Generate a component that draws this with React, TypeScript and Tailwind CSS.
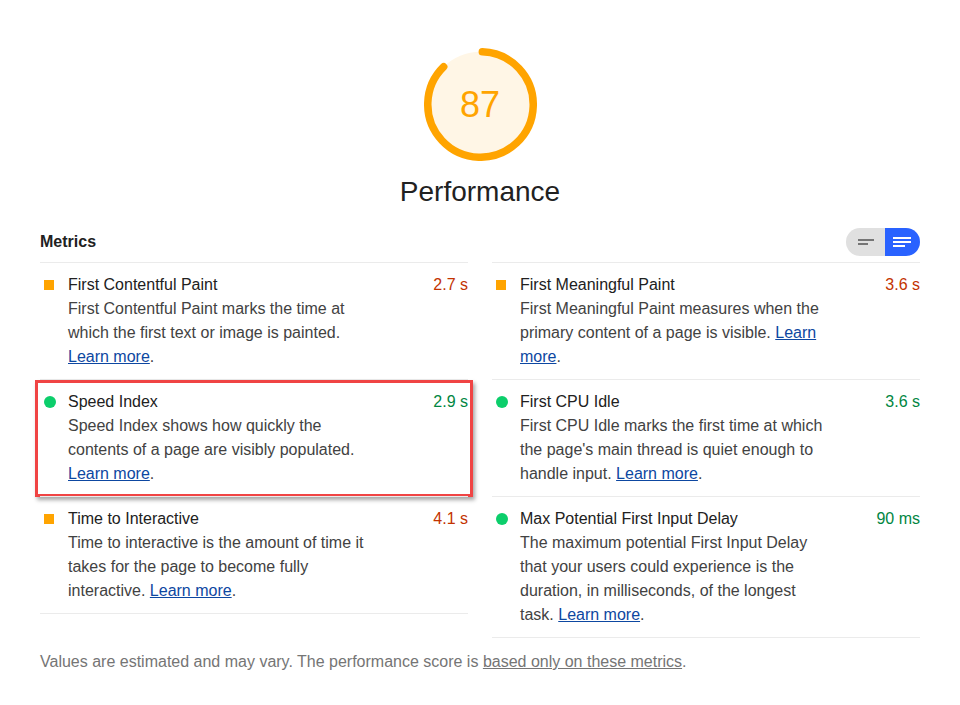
import React from "react";

type Metric = {
  title: string;
  value: string;
  status: "pass" | "average";
  text: string;
  highlight?: boolean;
};

const left: Metric[] = [
  {
    title: "First Contentful Paint",
    value: "2.7 s",
    status: "average",
    text: "First Contentful Paint marks the time at which the first text or image is painted.",
  },
  {
    title: "Speed Index",
    value: "2.9 s",
    status: "pass",
    text: "Speed Index shows how quickly the contents of a page are visibly populated.",
    highlight: true,
  },
  {
    title: "Time to Interactive",
    value: "4.1 s",
    status: "average",
    text: "Time to interactive is the amount of time it takes for the page to become fully interactive.",
  },
];

const right: Metric[] = [
  {
    title: "First Meaningful Paint",
    value: "3.6 s",
    status: "average",
    text: "First Meaningful Paint measures when the primary content of a page is visible.",
  },
  {
    title: "First CPU Idle",
    value: "3.6 s",
    status: "pass",
    text: "First CPU Idle marks the first time at which the page's main thread is quiet enough to handle input.",
  },
  {
    title: "Max Potential First Input Delay",
    value: "90 ms",
    status: "pass",
    text: "The maximum potential First Input Delay that your users could experience is the duration, in milliseconds, of the longest task.",
  },
];

const Gauge = () => {
  const c = 2 * Math.PI * 56;
  return (
    <div className="relative w-[113px] h-[113px]">
      <svg viewBox="0 0 120 120" className="w-[113px] h-[113px]">
        <circle cx="60" cy="60" r="56" fill="#fff6e6" />
        <circle
          cx="60"
          cy="60"
          r="56"
          fill="none"
          stroke="#ffa400"
          strokeWidth="8"
          strokeLinecap="round"
          strokeDasharray={`${c * 0.87} ${c}`}
          transform="rotate(-88 60 60)"
        />
      </svg>
      <div className="absolute inset-0 flex items-center justify-center text-[36px] text-[#ffa400]">
        87
      </div>
    </div>
  );
};

const MetricRow = ({ m }: { m: Metric }) => {
  return (
    <div className="relative flex border-t border-[#ebebeb] py-[10px]">
      <div className="w-[28px] shrink-0 flex items-start pt-[6px] pl-[4px]">
        {m.status === "pass" ? (
          <span className="block w-[12px] h-[12px] rounded-full bg-[#0cce6b]" />
        ) : (
          <span className="block w-[10px] h-[10px] mt-[1px] bg-[#ffa400]" />
        )}
      </div>
      <div className="flex-1">
        <div className="flex justify-between leading-[24px]">
          <span className="text-[#212121]">{m.title}</span>
          <span className={m.status === "pass" ? "text-[#018642]" : "text-[#c33300]"}>
            {m.value}
          </span>
        </div>
        <p className="w-[308px] leading-[24px] text-[#424242]">
          {m.text}{" "}
          <a className="text-[#0d47a1] underline">Learn more</a>.
        </p>
      </div>
      {m.highlight && (
        <div className="absolute -left-[5px] -right-[5px] top-0 -bottom-[1px] border-[3px] border-[#f04444] shadow-[2px_3px_4px_rgba(0,0,0,0.35)]" />
      )}
    </div>
  );
};

export default function App() {
  return (
    <div className="w-[960px] h-[705px] bg-white font-['Liberation_Sans',Arial,sans-serif] text-[16px]">
      <div className="flex flex-col items-center pt-[48px]">
        <Gauge />
        <div className="mt-[15px] text-[28px] leading-[32px] text-[#212121]">Performance</div>
      </div>

      <div className="mx-[40px] mt-[19px]">
        <div className="flex items-center justify-between h-[30px] mb-[5px]">
          <span className="font-bold text-[16px] text-[#212121]">Metrics</span>
          <div className="flex h-[28px] w-[74px] rounded-full overflow-hidden">
            <div className="flex-1 bg-[#e0e0e0] flex flex-col justify-center gap-[2px] pl-[12px]">
              <span className="block w-[16px] h-[2px] bg-[#757575]" />
              <span className="block w-[10px] h-[2px] bg-[#757575]" />
            </div>
            <div className="flex-1 bg-[#2962ff] flex flex-col justify-center gap-[2px] pl-[8px]">
              <span className="block w-[18px] h-[2px] bg-white" />
              <span className="block w-[18px] h-[2px] bg-white" />
              <span className="block w-[12px] h-[2px] bg-white" />
            </div>
          </div>
        </div>

        <div className="grid grid-cols-2 gap-x-[24px] items-start">
          <div className="border-b border-[#ebebeb]">
            {left.map((m) => (
              <MetricRow key={m.title} m={m} />
            ))}
          </div>
          <div className="border-b border-[#ebebeb]">
            {right.map((m) => (
              <MetricRow key={m.title} m={m} />
            ))}
          </div>
        </div>

        <p className="mt-[12px] leading-[24px] text-[#757575]">
          Values are estimated and may vary. The performance score is{" "}
          <a className="underline">based only on these metrics</a>.
        </p>
      </div>
    </div>
  );
}
